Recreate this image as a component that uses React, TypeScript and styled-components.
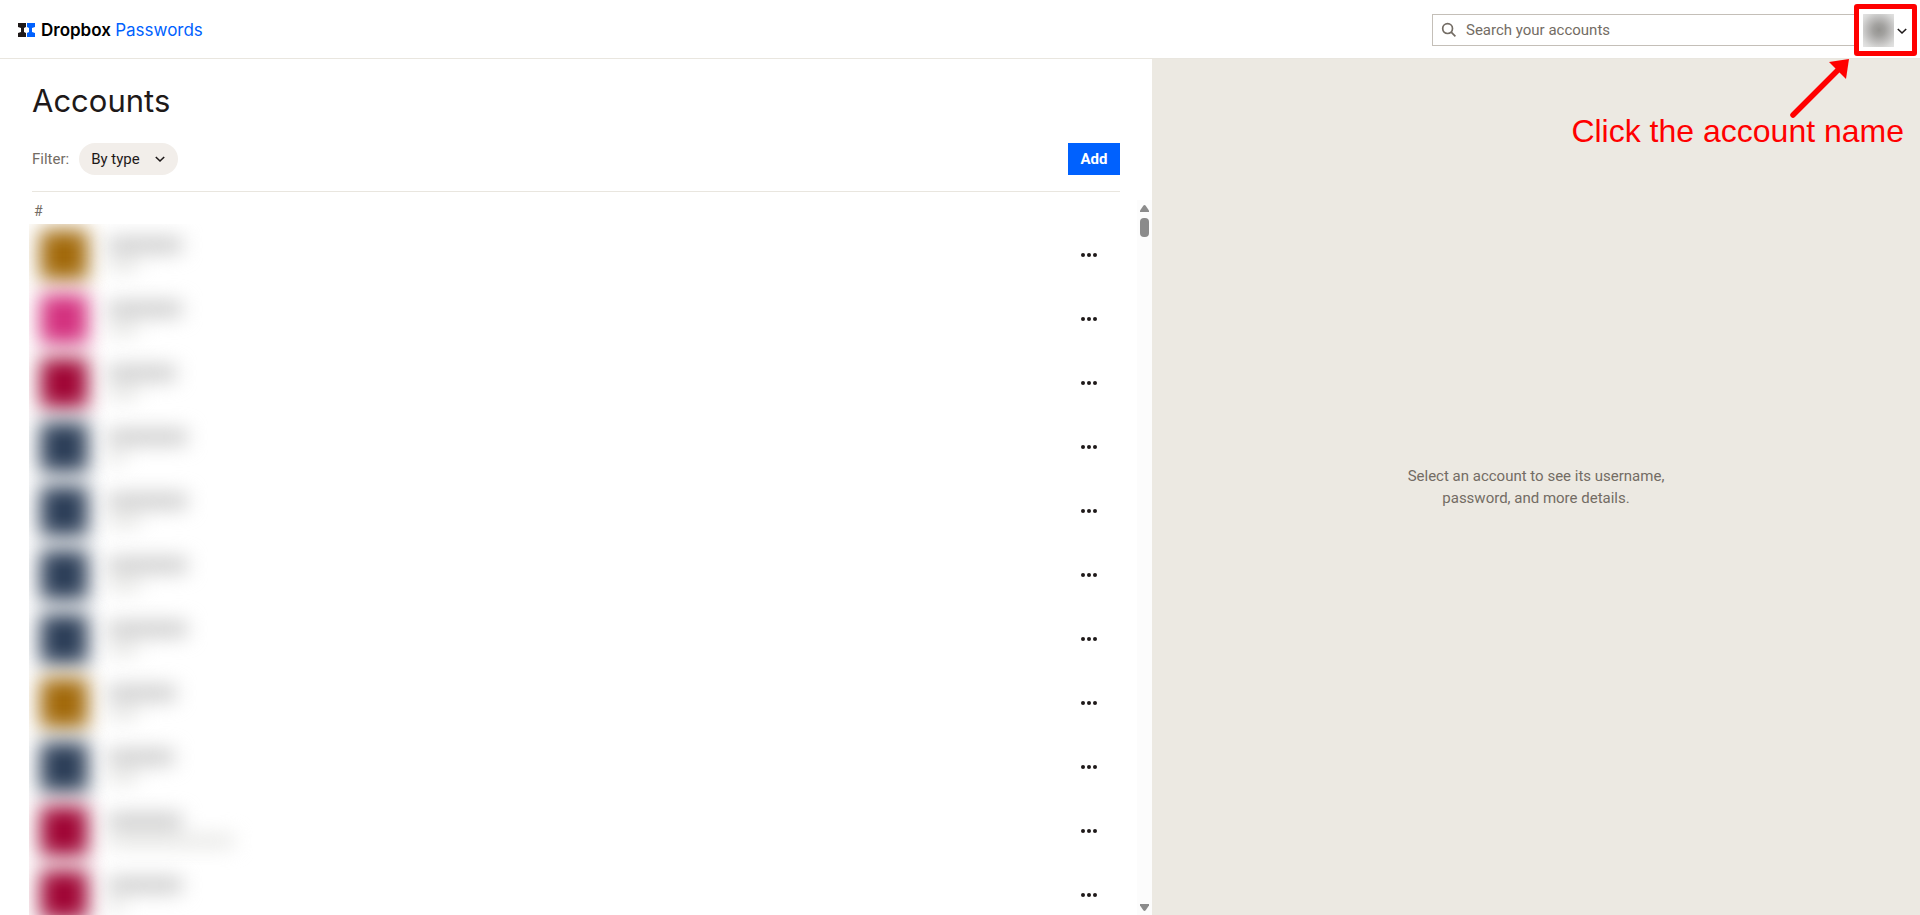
import React from "react";
import styled, { createGlobalStyle } from "styled-components";

const GlobalStyle = createGlobalStyle`
  *, *::before, *::after { box-sizing: border-box; }
  body {
    margin: 0;
    background: #fff;
    color: #1e1919;
    font: 15px/22px Roboto, "Liberation Sans", sans-serif;
  }
  button, input, select { font: inherit; color: inherit; }
`;

const Page = styled.div`
  display: flex;
  flex-direction: column;
  height: 100vh;
  overflow: hidden;
`;

const Header = styled.header`
  display: flex;
  flex: none;
  align-items: flex-start;
  justify-content: space-between;
  height: 59px;
  padding: 14px 12px 0 18px;
  border-bottom: 1px solid #e9e6df;
`;

const Brand = styled.a`
  display: flex;
  align-items: center;
  gap: 6px;
  color: #000;
  font: 600 17px/32px Inter, "Liberation Sans", sans-serif;
  text-decoration: none;
`;

const Product = styled.span`
  color: #0061fe;
  font-weight: 400;
`;

const HeaderTools = styled.div`
  display: flex;
  align-items: flex-start;
`;

const SearchBox = styled.label`
  display: flex;
  align-items: center;
  gap: 9px;
  width: 424px;
  height: 32px;
  padding: 0 8px;
  border: 1px solid #c4bfb8;
  color: #736c64;
`;

const SearchInput = styled.input`
  flex: 1;
  min-width: 0;
  padding: 0;
  border: 0;
  outline: 0;
  background: transparent;
  &::placeholder { color: #736c64; opacity: 1; }
`;

const AccountMenu = styled.div`
  position: relative;
  padding-left: 6px;
`;

const AccountButton = styled.button`
  display: flex;
  align-items: center;
  gap: 2px;
  padding: 0;
  border: 0;
  background: none;
`;

const Avatar = styled.span`
  width: 32px;
  height: 33px;
  background: radial-gradient(circle at 17px 16px, #959491 0, #a3a2a0 6px, #bdbcbb 12px, #d8d8d7 18px, #e8e8e8 24px);
`;

const Highlight = styled.div`
  position: absolute;
  top: -10px;
  right: -9px;
  width: 63px;
  height: 52px;
  border: 5px solid #f00;
  border-radius: 3px;
  background: linear-gradient(#fff, #fff) left / 4px 100% no-repeat;
  pointer-events: none;
`;

const Pointer = styled.svg`
  position: absolute;
  top: 44px;
  right: 56px;
  pointer-events: none;
`;

const Callout = styled.p`
  position: absolute;
  top: 99px;
  right: 4px;
  margin: 0;
  color: #f00;
  font: 32px/36px "Liberation Sans", Arial, sans-serif;
  white-space: nowrap;
`;

const Main = styled.main`
  display: grid;
  grid-template-columns: 3fr 2fr;
  flex: 1;
  min-height: 0;
`;

const AccountsPane = styled.section`
  display: flex;
  flex-direction: column;
  min-height: 0;
`;

const PaneHeader = styled.div`
  flex: none;
  margin: 0 32px;
  padding: 22px 0 16px;
  border-bottom: 1px solid #e9e6df;
`;

const Title = styled.h1`
  margin: 0 0 22px;
  font: 400 31px/40px Inter, "Liberation Sans", sans-serif;
`;

const Toolbar = styled.div`
  display: flex;
  align-items: center;
  justify-content: space-between;
`;

const Filter = styled.label`
  display: flex;
  align-items: center;
  gap: 10px;
  color: #736c64;
`;

const SelectWrap = styled.span`
  display: grid;
  grid-template-columns: 1fr 24px;
  align-items: center;
  width: 99px;
  height: 32px;
  border-radius: 16px;
  background: #f2eeea;
  color: #1e1919;
`;

const Select = styled.select`
  grid-area: 1 / 1 / 2 / 3;
  width: 100%;
  height: 32px;
  padding: 0 12px;
  border: 0;
  border-radius: 16px;
  background: transparent;
  appearance: none;
`;

const SelectArrow = styled.span`
  display: flex;
  grid-area: 1 / 2;
  pointer-events: none;
`;

const AddButton = styled.button`
  height: 32px;
  width: 52px;
  padding: 0;
  border: 0;
  background: #0061fe;
  color: #fff;
  font-weight: 700;
`;

const ListArea = styled.div`
  display: grid;
  grid-template-columns: 1fr 15px;
  flex: 1;
  min-height: 0;
  margin-top: 8px;
`;

const ListScroll = styled.div`
  display: flex;
  flex-direction: column;
  overflow: hidden;
  padding-left: 29px;
`;

const GroupLabel = styled.h2`
  flex: none;
  margin: 0;
  padding: 0 0 2px 5px;
  color: #736c64;
  font-size: 14px;
  font-weight: 400;
  line-height: 22px;
`;

const Rows = styled.ul`
  flex: 1;
  min-height: 0;
  margin: 0;
  padding: 0;
  list-style: none;
  overflow: hidden;
`;

const Row = styled.li`
  display: flex;
  align-items: center;
  height: 64px;
  padding: 0 36px 2px 11px;
`;

const Tile = styled.span<{ $color: string }>`
  flex: none;
  width: 48px;
  height: 50px;
  border-radius: 4px;
  background: ${(p) => p.$color};
  filter: blur(10px);
`;

const Details = styled.span`
  display: flex;
  flex: 1;
  flex-direction: column;
  gap: 8px;
  margin-left: 20px;
  padding-bottom: 2px;
  filter: blur(10px);
`;

const NameBar = styled.span<{ $width: number }>`
  width: ${(p) => p.$width}px;
  height: 14px;
  background: #c4c4c4;
`;

const UserBar = styled.span<{ $width: number }>`
  width: ${(p) => p.$width}px;
  height: 10px;
  background: #dededb;
`;

const MoreButton = styled.button`
  display: flex;
  padding: 4px;
  border: 0;
  background: none;
`;

const ScrollTrack = styled.div`
  display: flex;
  flex-direction: column;
  align-items: center;
  padding: 5px 0 4px;
  background: #fcfcfc;
`;

const ScrollThumb = styled.div`
  width: 9px;
  height: 19px;
  margin: 6px 0 auto;
  border-radius: 4px;
  background: #8b8b8b;
`;

const DetailPane = styled.aside`
  display: flex;
  align-items: center;
  justify-content: center;
  padding-bottom: 1px;
  background: #ece9e2;
  color: #736c64;
  text-align: center;
`;

const EmptyText = styled.p`
  max-width: 280px;
  margin: 0;
`;

const Logo = () => (
  <svg width="17" height="14" viewBox="0 0 17 14" aria-hidden="true">
    <path d="M0 0h8v4L6 5v4l2 1v4H0v-4l3-1V5L0 4z" fill="#1e1919" />
    <path d="M9 0h8v4l-3 1v4l3 1v4H9v-4l2-1V5L9 4z" fill="#0061fe" />
  </svg>
);

const SearchIcon = () => (
  <svg width="16" height="16" viewBox="0 0 16 16" fill="none" stroke="currentColor" strokeWidth="1.7" aria-hidden="true">
    <circle cx="6.6" cy="6.6" r="4.9" />
    <path d="M10.2 10.2l4.2 4.2" />
  </svg>
);

const Chevron = () => (
  <svg width="12" height="12" viewBox="0 0 12 12" fill="none" stroke="#1e1919" strokeWidth="1.6" aria-hidden="true">
    <path d="M1.8 4L6 8l4.2-4" />
  </svg>
);

const Dots = () => (
  <svg width="16" height="6" viewBox="0 0 16 6" fill="#1e1919" aria-hidden="true">
    <circle cx="2" cy="3" r="2" />
    <circle cx="8" cy="3" r="2" />
    <circle cx="14" cy="3" r="2" />
  </svg>
);

const ScrollArrow = ({ down = false }: { down?: boolean }) => (
  <svg width="9" height="7" viewBox="0 0 9 7" fill="#8b8b8b" aria-hidden="true">
    <path d={down ? "M0 0h9v1.5L5.7 6.2Q4.5 7.6 3.3 6.2L0 1.5z" : "M0 7h9V5.5L5.7.8Q4.5-.6 3.3.8L0 5.5z"} />
  </svg>
);

const GOLD = "#a2690a";
const PINK = "#d4317f";
const RED = "#a00535";
const NAVY = "#2c3e58";

const accounts = [
  { color: GOLD, name: 74, user: 30 },
  { color: PINK, name: 74, user: 30 },
  { color: RED, name: 68, user: 30 },
  { color: NAVY, name: 79, user: 18 },
  { color: NAVY, name: 79, user: 32 },
  { color: NAVY, name: 79, user: 32 },
  { color: NAVY, name: 79, user: 30 },
  { color: GOLD, name: 68, user: 30 },
  { color: NAVY, name: 66, user: 30 },
  { color: RED, name: 74, user: 126 },
  { color: RED, name: 74, user: 16 },
];

export default function App() {
  return (
    <Page>
      <GlobalStyle />
      <Header>
        <Brand href="#">
          <Logo />
          <span>
            Dropbox <Product>Passwords</Product>
          </span>
        </Brand>
        <HeaderTools>
          <SearchBox>
            <SearchIcon />
            <SearchInput type="search" placeholder="Search your accounts" aria-label="Search your accounts" />
          </SearchBox>
          <AccountMenu>
            <AccountButton aria-label="Account menu" aria-haspopup="menu">
              <Avatar />
              <Chevron />
            </AccountButton>
            <Highlight />
            <Pointer width="64" height="64" viewBox="0 0 64 64" fill="none" aria-hidden="true">
              <path d="M5 57L52 10" stroke="#f00" strokeWidth="5.5" strokeLinecap="round" />
              <path d="M61 1L41 4l17 17z" fill="#f00" />
            </Pointer>
            <Callout>Click the account name</Callout>
          </AccountMenu>
        </HeaderTools>
      </Header>
      <Main>
        <AccountsPane>
          <PaneHeader>
            <Title>Accounts</Title>
            <Toolbar>
              <Filter>
                Filter:
                <SelectWrap>
                  <Select>
                    <option>By type</option>
                  </Select>
                  <SelectArrow>
                    <Chevron />
                  </SelectArrow>
                </SelectWrap>
              </Filter>
              <AddButton>Add</AddButton>
            </Toolbar>
          </PaneHeader>
          <ListArea>
            <ListScroll>
              <GroupLabel>#</GroupLabel>
              <Rows>
                {accounts.map((account, i) => (
                  <Row key={i}>
                    <Tile $color={account.color} />
                    <Details>
                      <NameBar $width={account.name} />
                      <UserBar $width={account.user} />
                    </Details>
                    <MoreButton aria-label="More options">
                      <Dots />
                    </MoreButton>
                  </Row>
                ))}
              </Rows>
            </ListScroll>
            <ScrollTrack>
              <ScrollArrow />
              <ScrollThumb />
              <ScrollArrow down />
            </ScrollTrack>
          </ListArea>
        </AccountsPane>
        <DetailPane>
          <EmptyText>
            Select an account to see its username,
            <br />
            password, and more details.
          </EmptyText>
        </DetailPane>
      </Main>
    </Page>
  );
}
